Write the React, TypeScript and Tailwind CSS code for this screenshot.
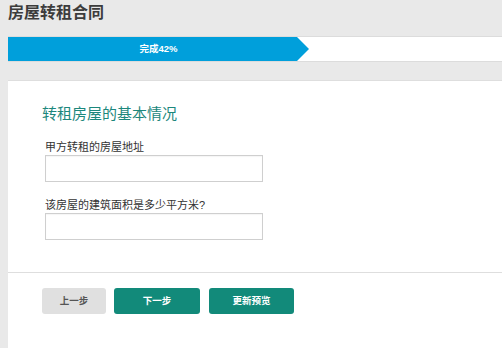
export default function App() {
  return (
    <div className="w-[502px] h-[348px] overflow-hidden bg-[#e9e9e9] pl-2 font-['Liberation_Sans','Noto_Sans_CJK_SC',sans-serif]">
      <h1 className="pt-[1px] h-9 text-[16px] leading-6 font-bold text-[#3c3c3c]">房屋转租合同</h1>

      {/* progress */}
      <div className="h-[26px] bg-white border-y border-[#dcdcdc] w-[600px]">
        <div className="h-6 w-[301px] bg-[#009fdb] flex items-center justify-center text-white text-[9.5px] font-bold [clip-path:polygon(0_0,calc(100%-12px)_0,100%_50%,calc(100%-12px)_100%,0_100%)]">
          完成42%
        </div>
      </div>

      <div className="mt-[18px] w-[600px] h-[300px] bg-white border-t border-[#dedede]">
        <div className="pl-[34px] pt-[22px]">
          <h2 className="text-[15px] leading-[22px] text-[#1c877c]">转租房屋的基本情况</h2>
          <div className="pl-[3px] mt-[15px]">
            <label className="block text-[11px] leading-[14px] text-[#333]">甲方转租的房屋地址</label>
            <input className="block mt-[1px] w-[218px] h-[27px] border border-[#cfcfcf] shadow-[inset_0_1px_1px_rgba(0,0,0,0.04)] outline-none" />
            <label className="block mt-[16px] text-[11px] leading-[14px] text-[#333]">该房屋的建筑面积是多少平方米?</label>
            <input className="block mt-[1px] w-[218px] h-[27px] border border-[#cfcfcf] shadow-[inset_0_1px_1px_rgba(0,0,0,0.04)] outline-none" />
          </div>
        </div>
        <div className="mt-[32px] border-t border-[#dedede]" />
        <div className="pl-[34px] pt-[15px] flex gap-2 text-[9.5px] font-bold">
          <button className="w-16 h-[26px] rounded-[3px] bg-[#e0e0e0] text-[#555]">上一步</button>
          <button className="w-[86px] h-[26px] rounded-[3px] bg-[#128a7a] text-white">下一步</button>
          <button className="w-[85px] h-[26px] rounded-[3px] bg-[#128a7a] text-white ml-[1px]">更新预览</button>
        </div>
      </div>
    </div>
  );
}
